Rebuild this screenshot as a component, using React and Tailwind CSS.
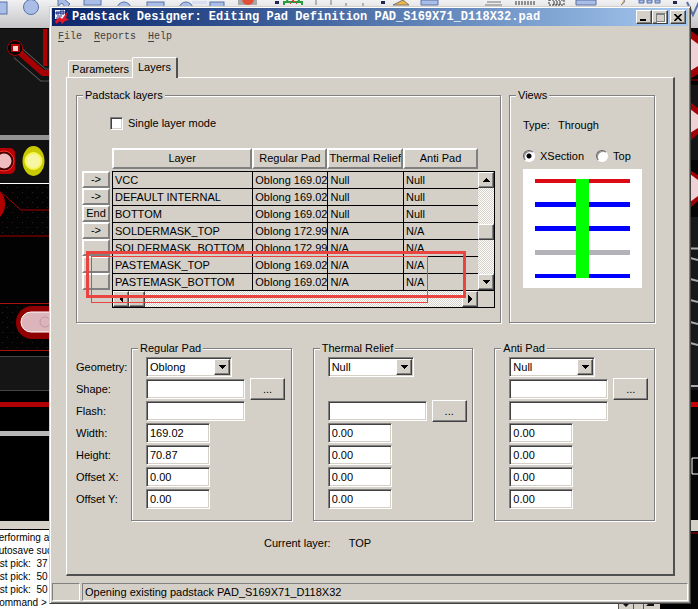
import React from "react";

const LAYERS = [
  ["->", "VCC", "Oblong 169.02", "Null", "Null"],
  ["->", "DEFAULT INTERNAL", "Oblong 169.02", "Null", "Null"],
  ["End", "BOTTOM", "Oblong 169.02", "Null", "Null"],
  ["->", "SOLDERMASK_TOP", "Oblong 172.99", "N/A", "N/A"],
  ["", "SOLDERMASK_BOTTOM", "Oblong 172.99", "N/A", "N/A"],
  ["", "PASTEMASK_TOP", "Oblong 169.02", "N/A", "N/A"],
  ["", "PASTEMASK_BOTTOM", "Oblong 169.02", "N/A", "N/A"],
];

const FIELDS = ["Geometry", "Shape", "Flash", "Width", "Height", "Offset X", "Offset Y"];

const PADS = [
  { name: "Regular Pad", geometry: "Oblong", browse: "Shape", shape: true, values: ["169.02", "70.87", "0.00", "0.00"] },
  { name: "Thermal Relief", geometry: "Null", browse: "Flash", shape: false, values: ["0.00", "0.00", "0.00", "0.00"] },
  { name: "Anti Pad", geometry: "Null", browse: "Shape", shape: true, values: ["0.00", "0.00", "0.00", "0.00"] },
];

const RAISED =
  "border border-t-white border-l-white border-r-[#404040] border-b-[#404040] bg-[#d4d0c8] shadow-[inset_-1px_-1px_0_#808080]";
const CELL_RAISED = "border-2 border-t-white border-l-white border-r-[#808080] border-b-[#808080] bg-[#d4d0c8]";
const SUNKEN =
  "border border-t-[#808080] border-l-[#808080] border-r-white border-b-white bg-white shadow-[inset_1px_1px_0_#404040,inset_-1px_-1px_0_#d4d0c8]";
const TRACK = "bg-[conic-gradient(#fff_25%,#d4d0c8_0_50%,#fff_0_75%,#d4d0c8_0)] bg-[length:2px_2px]";

function Arrow({ dir }) {
  const points = {
    up: "4,2 8,6 0,6",
    down: "0,2 8,2 4,6",
    left: "6,0 6,8 2,4",
    right: "2,0 6,4 2,8",
  }[dir];
  return (
    <svg width="8" height="8" viewBox="0 0 8 8" shapeRendering="crispEdges" aria-hidden="true">
      <polygon points={points} fill="#000" />
    </svg>
  );
}

function ScrollButton({ dir }) {
  return (
    <button type="button" aria-label={"Scroll " + dir} className={"flex size-4 shrink-0 items-center justify-center " + RAISED}>
      <Arrow dir={dir} />
    </button>
  );
}

function Group({ title, className = "", children }) {
  return (
    <fieldset className={"min-w-0 border border-[#808080] shadow-[1px_1px_0_#fff,inset_1px_1px_0_#fff] " + className}>
      <legend className="ml-[6px] bg-[#d4d0c8] px-[2px]">{title}</legend>
      {children}
    </fieldset>
  );
}

function Toolbar() {
  return (
    <div className="h-7 shrink-0 overflow-hidden bg-linear-to-b from-[#f1f1f4] to-[#c4c4c6]">
      <svg width="698" height="28" viewBox="0 0 698 28" aria-hidden="true">
        <g fill="#a9bde6" stroke="#5872a8">
          <rect x="-8" y="2" width="15" height="12" />
          <circle cx="31" cy="7" r="7.5" />
          <path d="M58 -6V6L62 3L66 8L70 4Z" />
          <rect x="84" y="-6" width="17" height="11" />
          <circle cx="124" cy="9" r="7" />
          <rect x="147" y="2" width="17" height="10" />
          <circle cx="186" cy="9" r="7" />
          <rect x="210" y="2" width="14" height="10" />
          <path d="M421 0h17v5h-17zM576 0h20v5h-20zM639 0h5v3h-5zM647 0h5v3h-5zM655 0h5v3h-5z" />
          <path d="M687 2l6 13 6-13" strokeWidth="2" fill="none" />
        </g>
        <path d="M192 1h15v3h-15z" fill="#d9def0" />
        <rect x="238" y="0" width="19" height="5" fill="#a6a8ac" />
        <circle cx="248" cy="-1" r="6" fill="#e34f36" />
        <path d="M284 5V2h18v3M287 2a6 6 0 0 1 12 0" fill="none" stroke="#2a9c3c" strokeWidth="2" />
        <path d="M290 4l3-4 4 4" stroke="#e33" fill="none" />
        <path d="M316 0v5M331 0v5M346 3v3M363 3v3M485 5h17M487 2h14" stroke="#777" />
        <path d="M515 2h20M515 4h20M549 0h15v5h-15zM553 2h8M553 4h8" stroke="#333" strokeDasharray="2 1" fill="none" />
        <path d="M393 5l10-5 6 5zM621 5q5-3 3-6" fill="#f0b541" stroke="#777" />
        <path d="M275 1h4v3h-4zM381 1h4v3h-4zM673 1h4v3h-4z" fill="#1d2550" />
      </svg>
    </div>
  );
}

function BoardLeft() {
  return (
    <svg width="50" height="493" viewBox="0 28 50 493" className="shrink-0" aria-hidden="true">
      <defs>
        <pattern id="dots" width="10" height="10" patternUnits="userSpaceOnUse">
          <rect width="10" height="10" fill="#030303" />
          <rect x="2" y="2" width="1" height="1" fill="#30201f" />
          <rect x="7" y="7" width="1" height="1" fill="#30201f" />
        </pattern>
      </defs>
      <rect y="28" width="50" height="493" fill="#000" />
      <rect y="29" width="50" height="106" fill="#151515" />
      <rect x="43" y="29" width="4" height="37" fill="#a00" />
      <path d="M18 53L43 75H50" stroke="#555" strokeWidth="13" fill="none" />
      <path d="M18 53L43 75H50" stroke="#111" strokeWidth="11" fill="none" />
      <path d="M18 51L43 73H50" stroke="#a50003" strokeWidth="6" fill="none" />
      <circle cx="15" cy="48" r="7.5" fill="#000" stroke="#a00" />
      <rect x="11" y="44" width="9" height="8" fill="#b00" />
      <rect x="13" y="46" width="5" height="5" fill="#ffd7d0" />
      <rect y="135" width="50" height="5" fill="#929292" />
      <rect y="140" width="50" height="43" fill="#111" />
      <rect x="-12" y="148" width="27" height="26" rx="5" fill="#b50005" />
      <circle cx="4" cy="161" r="10" fill="#4b0000" stroke="#f33" />
      <circle cx="4" cy="161" r="7.5" fill="#efbdc0" />
      <ellipse cx="33.500" cy="161" rx="11" ry="15" fill="#c9c900" />
      <circle cx="33.500" cy="161" r="8" fill="#f6f6a4" stroke="#f5f553" strokeWidth="2" />
      <rect y="183" width="50" height="1" fill="#fff" />
      <rect y="184" width="50" height="119" fill="url(#dots)" />
      <path d="M0 191A19 19 0 0 1 0 217Z" fill="#b00000" />
      <path d="M3 194L21 210H50M0 236H50" stroke="#a00" fill="none" />
      <rect y="237" width="50" height="66" fill="#020202" />
      <rect y="303" width="50" height="47" fill="url(#dots)" />
      <path d="M0 303.500H50M0 350.500H50" stroke="#a11" />
      <rect x="16" y="306" width="55" height="33" rx="16" fill="#900003" />
      <rect x="21" y="312" width="50" height="20" rx="10" fill="#dcb5bb" stroke="#fff" />
      <circle cx="45" cy="322" r="5" fill="none" stroke="#c596a0" />
      <rect y="356" width="50" height="34" fill="#151515" />
      <path d="M0 356.500H50M0 390.500H50" stroke="#444" />
      <rect y="402" width="50" height="5" fill="#b00006" />
      <rect y="431" width="50" height="5" fill="#b6b6b6" />
    </svg>
  );
}

function BoardRight() {
  return (
    <svg width="8" height="581" viewBox="690 28 8 581" className="shrink-0" aria-hidden="true">
      <rect x="690" y="28" width="8" height="581" fill="#050505" />
      <rect x="690" y="85" width="8" height="75" fill="#151515" />
      <path d="M690 30L698 36V74L690 79Z" fill="#a00006" />
      <path d="M690 38L698 44V66L690 71Z" fill="#efd0d3" />
      <path d="M690 80h8" stroke="#a00" />
      <path d="M690 102L698 108V134L690 141Z" fill="#a00006" />
      <path d="M690 109L698 115V128L690 133Z" fill="#efd0d3" />
      <path d="M690 170L698 175V201L690 208Z" fill="#a00006" />
      <path d="M690 174L698 180V196L690 202Z" fill="#efd0d3" />
      <rect x="690" y="217" width="8" height="173" fill="#17181a" />
      <path d="M690 248.500h8M690 258l8 2M690 279l8 2M690 300l8 2M690 322l8 2M690 343l8 2M690 386h8" stroke="#aaa" strokeWidth="2" />
      <rect x="690" y="402" width="8" height="5" fill="#c50009" />
      <path d="M698 458h-6v16h6" stroke="#fff" fill="none" />
      <rect x="690" y="520" width="8" height="11" fill="#d4d0c8" />
      <path d="M690 533h8" stroke="#a00" />
    </svg>
  );
}

function Console() {
  return (
    <div className="flex-1 border-t-8 border-[#d4d0c8] bg-[#d4d0c8]">
      <div className="flex h-full">
        <div className="h-full flex-1 overflow-hidden border-t border-black bg-white pt-px text-[10px] leading-[13px] whitespace-pre">
          <div className="-ml-2">
            <p>Performing au</p>
            <p>Autosave suc</p>
            <p>last pick:  37</p>
            <p>last pick:  50</p>
            <p>last pick:  50</p>
            <p>Command &gt;</p>
          </div>
        </div>
        <div className="flex w-[42px] flex-col justify-end">
          <svg width="42" height="8" viewBox="0 0 42 8" aria-hidden="true">
            <path d="M.5 0V8M15.500 0V8M25.500 0V8" stroke="#555" />
            <path d="M5 3h6L8 6ZM30 3h6v2h-8z" fill="#111" />
          </svg>
        </div>
        <div className="w-[30px] bg-black" />
      </div>
    </div>
  );
}

function Desktop() {
  return (
    <div className="flex h-full flex-col" aria-hidden="true">
      <Toolbar />
      <div className="flex min-h-0 flex-1 bg-black">
        <div className="flex min-w-0 flex-1 flex-col">
          <BoardLeft />
          <Console />
        </div>
        <BoardRight />
      </div>
    </div>
  );
}

function TitleBar() {
  return (
    <header className="flex h-[18px] items-center bg-linear-to-r from-[#0a246a] to-[#a6caf0] px-[2px]">
      <svg width="16" height="16" viewBox="0 0 16 16" className="shrink-0" aria-hidden="true">
        <path d="M1 1h10v9H1z" fill="#f4f4ff" />
        <path d="M2 3h3v2H2zM6 2h4v3H6zM3 7h5M2 9h4" stroke="#26348a" fill="#7c86c4" />
        <path d="M1 12l5-4 2 2 6-8-2 7 3 2-4 1-3 3-2-3-4 3z" fill="#e3162a" />
      </svg>
      <h1 className="min-w-0 flex-1 truncate pl-[2px] font-['Liberation_Mono',monospace] text-[12px] leading-4 font-bold text-white">
        Padstack Designer: Editing Pad Definition PAD_S169X71_D118X32.pad
      </h1>
      <button type="button" aria-label="Minimize" className={"flex h-[14px] w-4 items-end pb-[2px] pl-[3px] " + RAISED}>
        <span className="h-[2px] w-[6px] bg-black" />
      </button>
      <button type="button" aria-label="Maximize" className={"flex h-[14px] w-4 items-center justify-center " + RAISED}>
        <span className="h-[9px] w-[9px] border border-t-2 border-[#808080] shadow-[1px_1px_0_#fff]" />
      </button>
      <button type="button" aria-label="Close" className={"ml-[2px] flex h-[14px] w-4 items-center justify-center " + RAISED}>
        <svg width="8" height="7" viewBox="0 0 8 7" aria-hidden="true">
          <path d="M.5 0L7.500 7M7.500 0L.5 7" stroke="#000" strokeWidth="1.700" />
        </svg>
      </button>
    </header>
  );
}

function LayerTable() {
  return (
    <div className="relative mt-[18px]">
      <div className="flex">
        <table className="min-w-0 flex-1 table-fixed border-separate border-spacing-0">
          <colgroup>
            <col className="w-[30px]" />
            <col />
            <col className="w-[75px]" />
            <col className="w-[75px]" />
            <col className="w-[75px]" />
          </colgroup>
          <thead>
            <tr className="h-[23px]">
              <td className="p-0" />
              {["Layer", "Regular Pad", "Thermal Relief", "Anti Pad"].map((h) => (
                <th key={h} scope="col" className="p-0 align-top font-normal">
                  <div className={"h-[21px] overflow-hidden leading-[17px] whitespace-nowrap " + CELL_RAISED}>{h}</div>
                </th>
              ))}
            </tr>
          </thead>
          <tbody>
            {LAYERS.map(([mark, ...cells]) => (
              <tr key={cells[0]} className="h-[17px]">
                <td className="p-0">
                  <button type="button" aria-label={"Insert at " + cells[0]} className={"block h-[17px] w-7 leading-[13px] " + CELL_RAISED}>
                    {mark}
                  </button>
                </td>
                {cells.map((c, i) => (
                  <td key={i} className="overflow-hidden border-t border-l border-black p-0 pl-[2px] leading-4 whitespace-nowrap">
                    {c}
                  </td>
                ))}
              </tr>
            ))}
          </tbody>
        </table>
        <div className={"mt-[23px] flex w-[17px] flex-col border-t border-r border-black " + TRACK}>
          <ScrollButton dir="up" />
          <div className="flex-1" />
          <div className={"h-4 " + RAISED} />
          <div className="h-[34px]" />
          <ScrollButton dir="down" />
        </div>
      </div>
      <div className="ml-[30px] flex h-[18px] border border-black">
        <div className={"flex flex-1 " + TRACK}>
          <ScrollButton dir="left" />
          <div className={"w-4 " + RAISED} />
          <div className="flex-1" />
          <ScrollButton dir="right" />
        </div>
        <div className="w-4 bg-[#d4d0c8]" />
      </div>
      <div className="pointer-events-none absolute top-[103px] right-[29px] left-1 h-[47px] border-3 border-[#ea4440]" />
      <div className="pointer-events-none absolute top-[108px] right-[67px] left-[9px] h-[47px] border border-[#ea4440]" />
    </div>
  );
}

function CrossSection() {
  return (
    <svg width="119" height="119" viewBox="0 0 119 119" className="mt-[6px] bg-white" role="img" aria-label="Pad cross section">
      <g shapeRendering="crispEdges">
        <rect x="12" y="10" width="95" height="4" fill="#dc0a14" />
        <rect x="12" y="33" width="95" height="5" fill="#00f" />
        <rect x="12" y="57" width="95" height="5" fill="#00f" />
        <rect x="12" y="81" width="95" height="5" fill="#b2b2b8" />
        <rect x="12" y="105" width="95" height="4" fill="#00f" />
        <rect x="53" y="10" width="13" height="99" fill="#0f0" />
      </g>
    </svg>
  );
}

function ViewRadio({ label, checked }) {
  return (
    <label className="flex items-center gap-[5px]">
      <input
        type="radio"
        name="view"
        defaultChecked={checked}
        className="size-3 appearance-none rounded-full border border-t-[#606060] border-r-white border-b-white border-l-[#606060] bg-white shadow-[inset_1px_1px_0_#999] checked:bg-[radial-gradient(circle,#000_2px,#fff_3px)]"
      />
      {label}
    </label>
  );
}

function PadGroup({ pad, index }) {
  const label = (field) => pad.name + " " + field;
  const browse = (
    <button type="button" aria-label={"Browse " + pad.name} className={"h-[22px] w-[35px] shrink-0 " + RAISED}>
      ...
    </button>
  );
  return (
    <Group title={pad.name} className="flex-1">
      <div className="pt-px pb-[10px] pl-[14px]">
        <div className="flex h-[22px] items-center">
          <div className="relative">
            <select
              id={"Geometry" + index}
              aria-label={label("Geometry")}
              defaultValue={pad.geometry}
              className={"block h-5 w-[86px] appearance-none pl-[3px] leading-4 " + SUNKEN}
            >
              <option>Oblong</option>
              <option>Null</option>
            </select>
            <span className={"pointer-events-none absolute top-[2px] right-[2px] flex size-4 items-center justify-center " + RAISED}>
              <Arrow dir="down" />
            </span>
          </div>
        </div>
        {["Shape", "Flash"].map((f) => (
          <div key={f} className="flex h-[22px] items-center gap-[5px]">
            {(f === "Flash" || pad.shape) && (
              <input id={f + index} aria-label={label(f)} type="text" className={"h-5 w-[99px] px-[3px] " + SUNKEN} />
            )}
            {pad.browse === f && browse}
          </div>
        ))}
        {pad.values.map((v, i) => (
          <div key={i} className="flex h-[22px] items-center">
            <input
              id={FIELDS[i + 3] + index}
              aria-label={label(FIELDS[i + 3])}
              type="text"
              defaultValue={v}
              className={"h-5 w-16 px-[3px] " + SUNKEN}
            />
          </div>
        ))}
      </div>
    </Group>
  );
}

function LayersPane() {
  return (
    <main className="mr-[13px] ml-[14px] border-t border-r-2 border-b-2 border-l border-t-white border-r-[#505050] border-b-[#505050] border-l-white pt-[10px] pr-[18px] pb-6 pl-[9px]">
      <div className="flex gap-2">
        <Group title="Padstack layers" className="flex-1">
          <div className="pt-[14px] pr-[5px] pb-[14px] pl-[5px]">
            <label className="ml-7 flex w-fit items-center gap-[5px]">
              <input type="checkbox" className={"size-[13px] appearance-none " + SUNKEN} />
              Single layer mode
            </label>
            <LayerTable />
          </div>
        </Group>
        <Group title="Views" className="w-[146px] shrink-0">
          <div className="pt-4 pl-[13px]">
            <p className="flex gap-2">
              <span>Type:</span>
              <span>Through</span>
            </p>
            <div className="mt-[17px] flex gap-3">
              <ViewRadio label="XSection" checked />
              <ViewRadio label="Top" />
            </div>
            <CrossSection />
          </div>
        </Group>
      </div>
      <div className="mt-[18px] flex">
        <div className="w-[55px] shrink-0 pt-[15px]">
          {FIELDS.map((f) => (
            <label key={f} htmlFor={f + "0"} className="block leading-[22px] whitespace-nowrap">
              {f}:
            </label>
          ))}
        </div>
        <div className="flex min-w-0 flex-1 gap-[21px]">
          {PADS.map((pad, i) => (
            <PadGroup key={pad.name} pad={pad} index={i} />
          ))}
        </div>
      </div>
      <p className="mt-[15px] flex gap-[18px] pl-[188px]">
        <span>Current layer:</span>
        <span>TOP</span>
      </p>
    </main>
  );
}

export default function App() {
  return (
    <div className="relative h-screen overflow-hidden bg-black font-['Liberation_Sans',Arial,sans-serif] text-[11px] leading-[14px] text-black">
      <Desktop />
      <div className="absolute top-[6px] right-[7px] left-[49px] border border-t-[#d4d0c8] border-r-[#404040] border-b-[#404040] border-l-[#d4d0c8] bg-[#d4d0c8] px-[2px] pt-px pb-[2px] shadow-[inset_1px_1px_0_#fff,inset_-1px_-1px_0_#808080]">
        <TitleBar />
        <nav className="mt-[4px] flex gap-3 pl-[6px] font-['Liberation_Mono',monospace] text-[10px] text-[#404040]">
          {["File", "Reports", "Help"].map((m) => (
            <button key={m} type="button">
              <span className="underline underline-offset-2">{m[0]}</span>
              {m.slice(1)}
            </button>
          ))}
        </nav>
        <div role="tablist" className="mt-[13px] flex items-end pl-4">
          <button type="button" role="tab" aria-selected="false" className="h-[17px] w-16 rounded-t-xs border-t border-l border-white">
            Parameters
          </button>
          <button
            type="button"
            role="tab"
            aria-selected="true"
            className="-mb-px h-[21px] w-[46px] rounded-t-xs border-t border-r-2 border-l border-t-white border-r-[#505050] border-l-white bg-[#d4d0c8] pb-[2px]"
          >
            Layers
          </button>
        </div>
        <LayersPane />
        <footer className="mt-[7px] flex gap-[2px]">
          <div className="h-[18px] w-7 border border-t-[#808080] border-r-white border-b-white border-l-[#808080]" />
          <div className="h-[18px] flex-1 border border-t-[#808080] border-r-white border-b-white border-l-[#808080] pl-[2px] leading-4">
            Opening existing padstack PAD_S169X71_D118X32
          </div>
        </footer>
      </div>
    </div>
  );
}
